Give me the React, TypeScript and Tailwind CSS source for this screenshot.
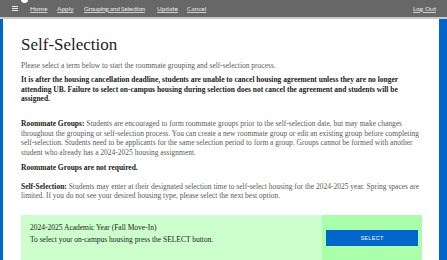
import React from "react";

export default function App() {
  const navLink = "underline text-[#e8e8e8] decoration-[#cfcfcf] whitespace-nowrap shrink-0";
  const body = "text-[7.5px] leading-[9.5px]";
  return (
    <div className="w-[447px] h-[260px] overflow-hidden bg-[#0066cc] relative" style={{ fontFamily: "'Liberation Serif', serif" }}>
      <div className="h-[17px] bg-[#676767] flex items-center text-[6.5px] relative" style={{ fontFamily: "Lato, 'Liberation Sans', sans-serif" }}>
        <div className="absolute left-[21px] top-[-4px] w-[7px] h-[7px] rounded-full bg-white" />
        <div className="ml-[12px] flex flex-col gap-[1px] w-[6px] shrink-0">
          <div className="h-[1px] bg-[#e8e8e8]" />
          <div className="h-[1px] bg-[#e8e8e8]" />
          <div className="h-[1px] bg-[#e8e8e8]" />
        </div>
        <div className="ml-[12px] flex">
          <span className={navLink + " w-[27px]"}>Home</span>
          <span className={navLink + " w-[27px]"}>Apply</span>
          <span className={navLink + " w-[73px]"}><span className="tracking-[-0.25px]">Grouping and Selection</span></span>
          <span className={navLink + " w-[30px]"}>Update</span>
          <span className={navLink}>Cancel</span>
        </div>
        <span className={navLink + " ml-auto mr-[11px]"}>Log Out</span>
      </div>
      <div className="h-[2px] bg-[#c8c8c8]" />
      <div className="ml-[3px] mr-[8px] bg-white h-[241px] pl-[18px] pr-[17px] pt-[16px]">
        <h1 className="text-[17px] leading-[20px] text-[#222]">Self-Selection</h1>
        <p className={"mt-[6px] text-[#5a5a5a] " + body}>Please select a term below to start the roommate grouping and self-selection process.</p>
        <p className={"mt-[4.5px] text-[#222] font-bold " + body}>It is after the housing cancellation deadline, students are unable to cancel housing agreement unless they are no longer attending UB. Failure to select on-campus housing during selection does not cancel the agreement and students will be assigned.</p>
        <p className={"mt-[15.5px] text-[#5a5a5a] " + body}><b className="text-[#222]">Roommate Groups:</b> Students are encouraged to form roommate groups prior to the self-selection date, but may make changes throughout the grouping or self-selection process. You can create a new roommate group or edit an existing group before completing self-selection. Students need to be applicants for the same selection period to form a group. Groups cannot be formed with another student who already has a 2024-2025 housing assignment.</p>
        <p className={"mt-[6px] text-[#222] font-bold " + body}>Roommate Groups are not required.</p>
        <p className={"mt-[9px] text-[#5a5a5a] " + body}><b className="text-[#222]">Self-Selection:</b> Students may enter at their designated selection time to self-select housing for the 2024-2025 year. Spring spaces are limited. If you do not see your desired housing type, please select the next best option.</p>
        <div className="mt-[14.5px] flex h-[50px]">
          <div className="flex-1 bg-[#ccffcc] pl-[9px] pt-[7px] text-[7.5px] leading-[11.5px] text-[#222]">
            <div>2024-2025 Academic Year (Fall Move-In)</div>
            <div>To select your on-campus housing press the SELECT button.</div>
          </div>
          <div className="w-[100px] bg-[#aaffaa] pt-[15px] px-[4px]">
            <div className="h-[16px] bg-[#0066cc] text-white text-[5.5px] flex items-center justify-center tracking-[0.3px]" style={{ fontFamily: "'Liberation Sans', sans-serif" }}>SELECT</div>
          </div>
        </div>
      </div>
    </div>
  );
}
